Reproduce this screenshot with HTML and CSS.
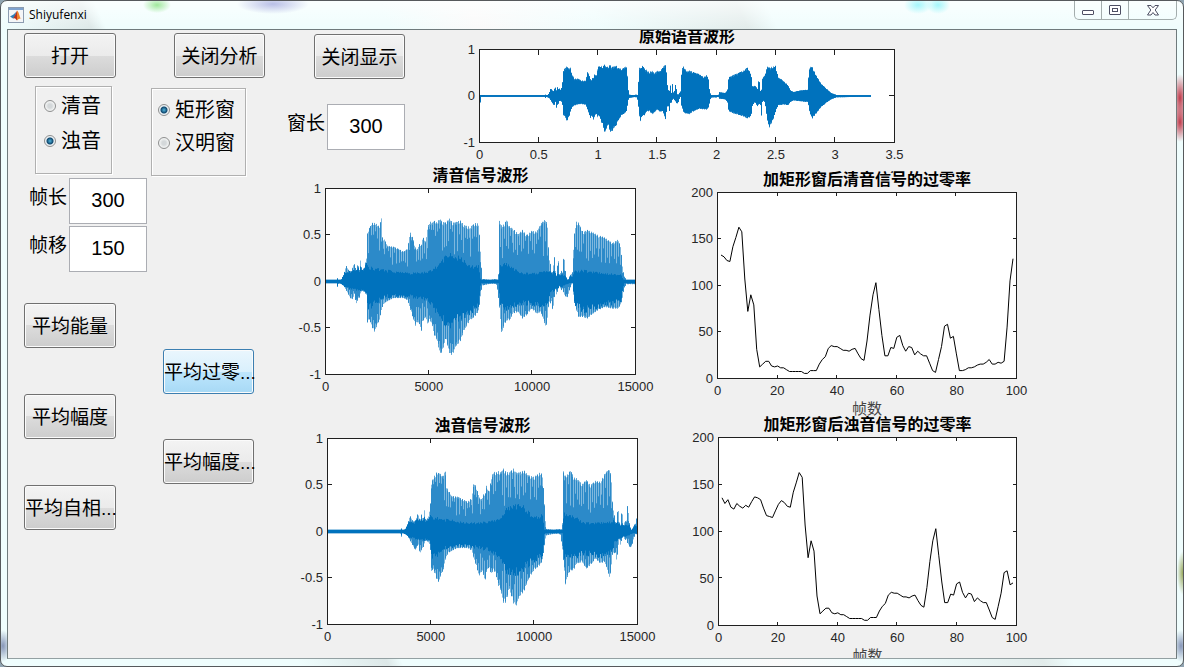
FILE: index.html
```html
<!DOCTYPE html>
<html lang="zh-CN">
<head>
<meta charset="utf-8">
<title>Shiyufenxi</title>
<link rel="stylesheet" href="styles.css">
</head>
<body>
<div class="window">
  <header class="titlebar">
    <svg class="app-icon" viewBox="0 0 16 16" aria-hidden="true">
      <rect x="0.5" y="0.5" width="15" height="15" fill="#f4f6f8" stroke="#8d9cb0"/>
      <rect x="1" y="1" width="14" height="2" fill="#7fa3cf"/>
      <path d="M2 9.5 L5.5 7.5 L8 5 L7.5 9 L5 11.5 Z" fill="#2f7fb8"/>
      <path d="M5 11.5 L7.2 8 L9 3.5 L9.8 7 L9 13.5 L7 11.2 Z" fill="#b8321c"/>
      <path d="M9 3.5 Q10.5 4.5 11.5 8.5 T14 12 Q11.5 10.5 9 13.5 Z" fill="#f0822a"/>
    </svg>
    <h1 class="window-title">Shiyufenxi</h1>
    <div class="window-buttons">
      <button type="button" class="window-button" aria-label="最小化">
        <svg width="13" height="6" viewBox="0 0 13 6"><rect x="0.5" y="0.5" width="11" height="4" rx="0.5" fill="#fff" stroke="#4d4f63"/></svg>
      </button>
      <button type="button" class="window-button" aria-label="最大化">
        <svg width="12" height="10" viewBox="0 0 12 10"><rect x="0.5" y="0.5" width="11" height="9" rx="0.5" fill="#fff" stroke="#4d4f63"/><rect x="3.5" y="3.5" width="5" height="3" fill="#fff" stroke="#4d4f63"/></svg>
      </button>
      <button type="button" class="window-button window-button-close" aria-label="关闭">
        <svg width="12" height="11" viewBox="0 0 12 11"><path d="M0.5 0.5 H4 L6 2.8 L8 0.5 H11.5 L8.2 5 L11.5 10 H8 L6 7.5 L4 10 H0.5 L3.8 5 Z" fill="#fff" stroke="#4d4f63"/></svg>
      </button>
    </div>
  </header>

  <main class="client">
    <section class="column column-first">
      <button type="button" class="push">打开</button>
      <fieldset class="panel panel-sound" aria-label="音类">
        <label class="radio"><input type="radio" name="sound">清音</label>
        <label class="radio"><input type="radio" name="sound" checked>浊音</label>
      </fieldset>
      <div class="fields">
        <label for="frame-length">帧长</label>
        <input class="edit" id="frame-length" type="text" value="300">
        <label for="frame-shift">帧移</label>
        <input class="edit" id="frame-shift" type="text" value="150">
      </div>
      <div class="stack">
        <button type="button" class="push">平均能量</button>
        <button type="button" class="push">平均幅度</button>
        <button type="button" class="push">平均自相...</button>
      </div>
    </section>

    <section class="column column-second">
      <button type="button" class="push">关闭分析</button>
      <fieldset class="panel panel-window" aria-label="窗函数">
        <label class="radio"><input type="radio" name="win" checked>矩形窗</label>
        <label class="radio"><input type="radio" name="win">汉明窗</label>
      </fieldset>
      <div class="stack">
        <button type="button" class="push push-active">平均过零...</button>
        <button type="button" class="push">平均幅度...</button>
      </div>
    </section>

    <section class="plots">
      <div class="plot-row plot-row-top">
        <div class="window-controls">
          <button type="button" class="push">关闭显示</button>
          <div class="fields">
            <label for="window-length">窗长</label>
            <input class="edit" id="window-length" type="text" value="300">
          </div>
        </div>
        <figure class="chart chart-source">
          <figcaption>原始语音波形</figcaption>
          <div class="y-ticks"><span>1</span><span>0</span><span>-1</span></div>
          <div class="plot" data-chart="source"></div>
          <div class="x-ticks"><span>0</span><span>0.5</span><span>1</span><span>1.5</span><span>2</span><span>2.5</span><span>3</span><span>3.5</span></div>
          <span class="exponent">×10<sup>4</sup></span>
        </figure>
      </div>

      <div class="plot-row plot-row-unvoiced">
        <figure class="chart">
          <figcaption>清音信号波形</figcaption>
          <div class="y-ticks"><span>1</span><span>0.5</span><span>0</span><span>-0.5</span><span>-1</span></div>
          <div class="plot" data-chart="unvoiced"></div>
          <div class="x-ticks"><span>0</span><span>5000</span><span>10000</span><span>15000</span></div>
        </figure>
        <figure class="chart chart-lowered">
          <figcaption>加矩形窗后清音信号的过零率</figcaption>
          <div class="y-ticks"><span>200</span><span>150</span><span>100</span><span>50</span><span>0</span></div>
          <div class="plot" data-chart="unvoicedRate"></div>
          <div class="x-ticks"><span>0</span><span>20</span><span>40</span><span>60</span><span>80</span><span>100</span></div>
          <p class="x-label">帧数</p>
        </figure>
      </div>

      <div class="plot-row plot-row-voiced">
        <figure class="chart">
          <figcaption>浊音信号波形</figcaption>
          <div class="y-ticks"><span>1</span><span>0.5</span><span>0</span><span>-0.5</span><span>-1</span></div>
          <div class="plot" data-chart="voiced"></div>
          <div class="x-ticks"><span>0</span><span>5000</span><span>10000</span><span>15000</span></div>
        </figure>
        <figure class="chart chart-tall">
          <figcaption>加矩形窗后浊音信号的过零率</figcaption>
          <div class="y-ticks"><span>200</span><span>150</span><span>100</span><span>50</span><span>0</span></div>
          <div class="plot" data-chart="voicedRate"></div>
          <div class="x-ticks"><span>0</span><span>20</span><span>40</span><span>60</span><span>80</span><span>100</span></div>
          <p class="x-label">帧数</p>
        </figure>
      </div>
    </section>
  </main>
</div>
<script src="charts.js"></script>
</body>
</html>
```

FILE: styles.css
```css
* {
  box-sizing: border-box;
}

body {
  margin: 0;
  background: #8fa3b0;
  color: #000;
  font-family: "Liberation Sans", "Noto Sans CJK SC", sans-serif;
}

button,
input {
  font: inherit;
  color: inherit;
}

.window {
  display: flex;
  flex-direction: column;
  height: 100vh;
  padding: 0 6px 7px;
  border: 1px solid #56595c;
  border-radius: 7px;
  background:
    radial-gradient(14px 8px at 156px 4px, #9fe89b, transparent),
    radial-gradient(36px 10px at 272px 3px, #b9bfe6, transparent),
    radial-gradient(14px 9px at 917px 4px, #a4f6fb, transparent),
    radial-gradient(12px 9px at 937px 4px, #a4f6fb, transparent),
    radial-gradient(8px 24px at 1179px 97px, #c0394a, transparent),
    radial-gradient(8px 20px at 1179px 121px, #c0394a, transparent),
    radial-gradient(6px 22px at 1182px 572px, #98a75a, transparent),
    radial-gradient(8px 16px at 2px 645px, #8796b8, transparent),
    radial-gradient(8px 16px at 1180px 645px, #8796b8, transparent),
    linear-gradient(to bottom, rgba(255, 255, 255, 0.7), rgba(255, 255, 255, 0) 28px),
    linear-gradient(65deg, transparent 20%, #dde8e8 26%, #effdfd 27%, #effdfd 46%, #fafafa 52%, #effdfd 60%, #e2eceb 70%, #effdfd 72%),
    #effdfd;
}

.titlebar {
  display: flex;
  flex: none;
  align-items: flex-start;
  height: 28px;
  padding-left: 1px;
}

.app-icon {
  width: 16px;
  height: 16px;
  margin-top: 6px;
}

.window-title {
  flex: 1;
  margin: 6px 0 0 5px;
  font: 12px/16px "Open Sans", "Noto Sans", sans-serif;
}

.window-buttons {
  display: flex;
  height: 19px;
  border: 1px solid #a3adad;
  border-top: 0;
  border-radius: 0 0 5px 5px;
}

.window-button {
  display: grid;
  place-items: center;
  width: 27px;
  padding: 0;
  border: 0;
  border-right: 1px solid #a3adad;
  background: none;
}

.window-button:first-child {
  padding-top: 5px;
}

.window-button-close {
  width: 47px;
  border-right: 0;
}

.client {
  display: flex;
  flex: 1;
  min-height: 0;
  overflow: hidden;
  padding-left: 16px;
  border: 1px solid #6f7a7c;
  border-bottom-color: #93a0a2;
  background: #f0f0f0;
}

.column {
  flex: none;
  padding-top: 3px;
}

.column-first {
  width: 123px;
}

.column-second {
  width: 114px;
  margin: 0 17px 0 4px;
}

.column-second > .push {
  margin-left: 23px;
}

.push {
  display: block;
  width: 92px;
  height: 45px;
  padding: 2px 0 0;
  border: 1px solid #707070;
  border-radius: 3px;
  background: linear-gradient(#f3f3f3, #ebebeb 50%, #dcdcdc 50%, #cdcdcd);
  box-shadow: inset 0 0 0 1px #fbfbfb;
  font-size: 19px;
  line-height: 24px;
  white-space: nowrap;
}

.column-second .push,
.window-controls .push {
  width: 91px;
}

.push-active {
  border-color: #3c7fb1;
  background: linear-gradient(#eaf6fd, #d9f0fc 50%, #bee6fd 50%, #a7d9f5);
}

.stack {
  display: grid;
  gap: 45px;
}

.column-first .stack {
  gap: 46px;
  margin-top: 31px;
}

.column-second .stack {
  margin: 173px 0 0 12px;
}

.panel {
  display: flex;
  flex-direction: column;
  min-width: 0;
  height: 88px;
  margin: 0;
  padding: 0;
  border: 1px solid #b0b0b0;
  box-shadow: inset 1px 1px 0 #fff, 1px 1px 0 #fff;
}

.panel-sound {
  gap: 11px;
  width: 77px;
  margin: 8px 0 0 11px;
  padding: 7px 0 0 8px;
}

.panel-window {
  gap: 9px;
  width: 95px;
  margin-top: 10px;
  padding: 9px 0 0 6px;
}

.radio {
  display: flex;
  gap: 5px;
  align-items: center;
  font-size: 20px;
  line-height: 24px;
  white-space: nowrap;
}

.radio input {
  appearance: none;
  width: 12px;
  height: 12px;
  margin: 0;
  border: 1px solid #8e8f8f;
  border-radius: 50%;
  background: radial-gradient(circle, #d4d8da 2px, #eceeee 4px, #fff);
}

.radio input:checked {
  background: radial-gradient(circle, #4fb4dc, #10486f 3px, #e8eef2 4px, #fff);
}

.fields {
  display: grid;
  grid-template-columns: 40px 78px;
  gap: 2px 0;
  font-size: 19px;
  line-height: 24px;
}

.column-first .fields {
  margin: 4px 0 0 5px;
}

.fields label {
  padding-top: 8px;
}

.edit {
  width: 78px;
  height: 46px;
  padding: 0 0 2px;
  border: 1px solid #abadb3;
  background: #fff;
  font-size: 20px;
  text-align: center;
}

.plots {
  flex: 1;
  min-width: 0;
}

.plot-row {
  display: grid;
}

.plot-row-top {
  grid-template-columns: 118px 1fr;
  column-gap: 31px;
  height: 139px;
  padding: 0 281px 0 5px;
}

.plot-row-unvoiced {
  grid-template-columns: 354fr 343fr;
  column-gap: 38px;
  padding-right: 159px;
  margin-bottom: 1px;
}

.plot-row-voiced {
  grid-template-columns: 356fr 342fr;
  column-gap: 37px;
  padding-right: 159px;
}

.window-controls {
  padding-top: 4px;
}

.window-controls .push {
  margin-left: auto;
}

.window-controls .fields {
  margin-top: 25px;
}

.chart {
  position: relative;
  display: grid;
  grid-template-columns: 43px 1fr;
  align-content: start;
  min-width: 0;
  margin: 0;
}

.plot-row-voiced .chart:first-child {
  grid-template-columns: 45px 1fr;
  margin-top: 1px;
}

.chart-lowered {
  margin-top: 4px;
}

.chart figcaption {
  grid-column: 2;
  justify-self: center;
  z-index: 1;
  height: 19px;
  background: #f0f0f0;
  font-family: "Liberation Serif", "Noto Sans CJK SC", sans-serif;
  font-size: 16px;
  font-weight: bold;
  line-height: 14px;
  white-space: nowrap;
}

.plot {
  grid-column: 2;
  height: 187px;
  border: 1px solid #1f1f1f;
  background: #fff;
}

.chart-source .plot {
  height: 94px;
}

.chart-tall .plot {
  height: 189px;
}

.plot svg {
  display: block;
  width: 100%;
  height: 100%;
}

.y-ticks,
.x-ticks {
  display: flex;
  justify-content: space-between;
  color: #262626;
  font-size: 13px;
  line-height: 14px;
}

.y-ticks {
  flex-direction: column;
  align-items: flex-end;
  padding-right: 4px;
}

.y-ticks span {
  display: flex;
  align-items: center;
  height: 1px;
}

.x-ticks {
  grid-column: 2;
  height: 14px;
  margin-top: 5px;
}

.x-ticks span {
  display: flex;
  justify-content: center;
  width: 1px;
}

.x-label {
  grid-column: 2;
  margin: 3px 0 0;
  color: #444;
  font-size: 15px;
  line-height: 16px;
  text-align: center;
}

.exponent {
  position: absolute;
  right: 1px;
  bottom: -18px;
  color: #262626;
  font-size: 13px;
  line-height: 14px;
}

.exponent sup {
  font-size: 10px;
  line-height: 1;
}

.ticks {
  fill: none;
  stroke: #1f1f1f;
}

.wave {
  fill: none;
  stroke: #0072bd;
}

.wave-soft {
  stroke-opacity: 0.5;
}

.wave-dense {
  stroke-opacity: 0.85;
}

.wave-strong {
  stroke-opacity: 0.65;
}

.rate {
  fill: none;
  stroke: #000;
  stroke-linejoin: round;
}
```

FILE: charts.js
```js
// Envelope rows: [position, upper, lower], in the grid units of each recording part.
const speech = [
  [106,343,353],[138,343,353],[141,338,366],[144,343,353],[152,342,356],[160,325,362],[167,300,375],
  [175,315,390],[182,318,403],[188,300,400],[191,293,380],[197,315,418],[203,290,400],[206,322,400],
  [210,280,385],[214,315,375],[222,305,380],[228,275,390],[231,200,475],[236,188,460],[243,175,480],
  [248,168,495],[253,172,500],[260,175,480],[267,183,465],[273,155,435],[276,215,425],[283,222,412],
  [290,240,408],[310,243,398],[325,250,398],[340,258,398],[352,248,405],[359,198,430],[367,215,455],
  [375,245,482],[382,250,470],[387,235,475],[393,240,500],[397,210,470],[405,230,455],[411,190,478],
  [418,165,465],[425,172,475],[432,165,510],[440,170,525],[448,158,563],[456,168,563],[466,170,520],
  [478,158,565],[487,170,572],[495,170,545],[510,163,530],[522,178,495],[540,183,465],[558,170,450],
  [566,175,436],[570,240,400],[576,340,360],[600,343,355],[615,340,355],[620,342,358],[623,342,380],
  [626,320,405],[628,165,425],[635,180,510],[642,175,480],[650,162,465],[660,185,465],[668,187,445],
  [685,205,440],[697,192,460],[710,208,450],[725,195,430],[740,198,445],[752,175,440],[760,165,460],
  [768,160,490],[773,187,455],[777,275,410],[781,290,415],[785,320,410],[789,320,442],[793,265,400],
  [797,320,370],[800,330,390],[805,275,370],[809,330,362],[814,315,375],[818,320,370],[822,262,385],
  [828,330,395],[834,345,395],[840,330,370],[848,320,350],[852,220,405],[858,167,430],[866,170,455],
  [880,200,455],[892,192,460],[910,200,445],[925,208,435],[945,215,425],[968,232,430],[984,222,430],
  [993,240,420],[998,300,400],[1003,330,370],[1010,343,356],[1036,343,356]
];

const speechCore = [
  [106,343,353],[228,290,385],[233,300,440],[280,310,400],[340,320,395],[360,320,400],[410,315,412],
  [440,300,450],[455,275,480],[480,262,490],[510,268,470],[540,300,450],[565,295,430],[572,345,352],
  [626,345,352],[630,290,430],[650,290,440],[690,320,420],[740,320,430],[775,315,420],[782,310,385],
  [805,325,370],[848,330,350],[854,315,420],[880,312,445],[930,320,430],[993,325,415],[1003,345,352],[1036,345,352]
];

const tail = [
  [829,209,215],[835,209,215],[838,200,220],[855,203,222],[862,195,230],[866,155,258],[880,148,265],
  [900,140,270],[910,135,275],[922,125,280],[928,135,278],[934,150,270],[938,185,240],[945,180,230],
  [953,190,245],[957,155,235],[962,200,240],[964,200,280],[968,155,225],[974,150,230],[978,140,250],
  [981,122,280],[988,125,309],[1000,122,285],[1007,120,260],[1015,155,240],[1030,165,238],[1045,180,240],
  [1052,195,230],[1062,200,225],[1080,195,228],[1103,193,230],[1107,140,245],[1110,123,265],[1118,125,280],
  [1130,150,265],[1145,175,245],[1160,190,232],[1175,203,222],[1190,209,216],[1293,210,214]
];

const scaleSpeech = rows => rows.map(([p, a, b]) => [5000 + (p - 106) * 16.13, (348 - a) / 279, (348 - b) / 279]);
const scaleTail = rows => rows.map(([p, a, b]) => [(p - 118) * 28.11, (212 - a) / 139.5, (212 - b) / 139.5]);
const quiet = [[0, 0.02, -0.14], [90, 0.02, -0.14], [110, 0.018, -0.018], [4990, 0.018, -0.018]];

const outer = [...quiet, ...scaleSpeech(speech), ...scaleTail(tail)];
const core = [...quiet, ...scaleSpeech(speechCore), ...scaleTail(tail)];

// Zero-crossing counts per frame, starting 20 frames before the unvoiced part.
const rates = [
  136,130,134,126,124,130,127,125,128,126,132,137,136,134,125,117,116,115,122,129,
  133,131,127,126,142,152,163,158,107,72,90,79,31,12,15,18,18,13,12,13,
  11,11,9,7,7,7,7,7,5,5,8,8,8,15,20,23,32,35,34,34,
  32,30,30,29,31,32,26,21,19,40,68,90,103,74,46,24,24,33,32,44,
  46,35,29,34,33,25,29,26,24,24,16,8,6,20,34,56,58,43,45,26,
  8,8,9,11,11,12,14,15,15,17,20,15,15,17,16,18,55,105,129
];

const sample = (rows, t) => {
  const i = rows.findIndex(r => r[0] >= t);
  if (i < 0) return null;
  if (i === 0) return [rows[0][1], rows[0][2]];
  const [t0, a0, b0] = rows[i - 1];
  const [t1, a1, b1] = rows[i];
  const k = (t - t0) / (t1 - t0);
  return [a0 + (a1 - a0) * k, b0 + (b1 - b0) * k];
};

const noise = n => {
  const v = Math.sin(n * 12.9898) * 43758.5453;
  return v - Math.floor(v);
};

const ticks = (w, h, xs, ys, len) => {
  let d = '';
  for (let i = 1; i < xs; i++) {
    const x = Math.round(w * i / xs) - 0.5;
    d += `M${x} 0v${len}M${x} ${h}v${-len}`;
  }
  for (let i = 1; i < ys; i++) {
    const y = Math.round(h * i / ys) - 0.5;
    d += `M0 ${y}h${len}M${w} ${y}h${-len}`;
  }
  return `<path class="ticks" d="${d}"/>`;
};

const wave = (w, h, start, span, dense) => {
  const layers = { core: '', soft: '', strong: '' };
  const y = v => (h / 2 - v * h / 2).toFixed(1);
  for (let i = 0; i < w; i++) {
    const t = start + (i + 0.5) / w * span;
    const o = sample(outer, t);
    if (!o) break;
    const c = dense ? o : sample(core, t);
    const bar = (a, b) => `M${i + 0.5} ${y(Math.max(a, 0.018))}V${y(Math.min(b, -0.018))}`;
    const inner = 1 - (dense ? 0.12 : 0.25) * noise(i * 7 + 1);
    const edge = 1 - 0.06 * noise(i + start / 1000);
    const peak = (i / 2.15) % 1 < 0.5;
    const reach = 0.4 + 0.5 * noise(i * 3);
    layers.core += bar(Math.min(c[0], o[0]) * inner, Math.max(c[1], o[1]) * inner);
    layers.soft += bar(o[0] * edge, o[1] * edge);
    layers.strong += peak ? bar(o[0], o[1]) : bar(o[0] * reach, o[1] * reach);
  }
  const soft = dense ? 'wave-dense' : 'wave-soft';
  return `<path class="wave ${soft}" d="${layers.soft}"/>` +
    `<path class="wave wave-strong" d="${layers.strong}"/>` +
    `<path class="wave" d="${layers.core}"/>`;
};

const rate = (w, h, values) => {
  const points = values.map((v, i) => `${((i + 1) / 100 * w).toFixed(1)},${(h - v / 200 * h).toFixed(1)}`);
  return `<polyline class="rate" points="${points.join(' ')}"/>`;
};

const charts = {
  source: (w, h) => ticks(w, h, 7, 2, 5) + wave(w, h, 0, 35000, true),
  unvoiced: (w, h) => ticks(w, h, 3, 4, 4) + wave(w, h, 5000, 15000, false),
  voiced: (w, h) => ticks(w, h, 3, 4, 4) + wave(w, h, 2000, 15000, false),
  unvoicedRate: (w, h) => ticks(w, h, 5, 4, 3) + rate(w, h, rates.slice(20)),
  voicedRate: (w, h) => ticks(w, h, 5, 4, 3) + rate(w, h, rates.slice(0, 99))
};

const draw = () => {
  document.querySelectorAll('.plot').forEach(plot => {
    const w = plot.clientWidth;
    const h = plot.clientHeight;
    plot.innerHTML = `<svg viewBox="0 0 ${w} ${h}" aria-hidden="true">${charts[plot.dataset.chart](w, h)}</svg>`;
  });
};

draw();
window.addEventListener('resize', draw);
```
